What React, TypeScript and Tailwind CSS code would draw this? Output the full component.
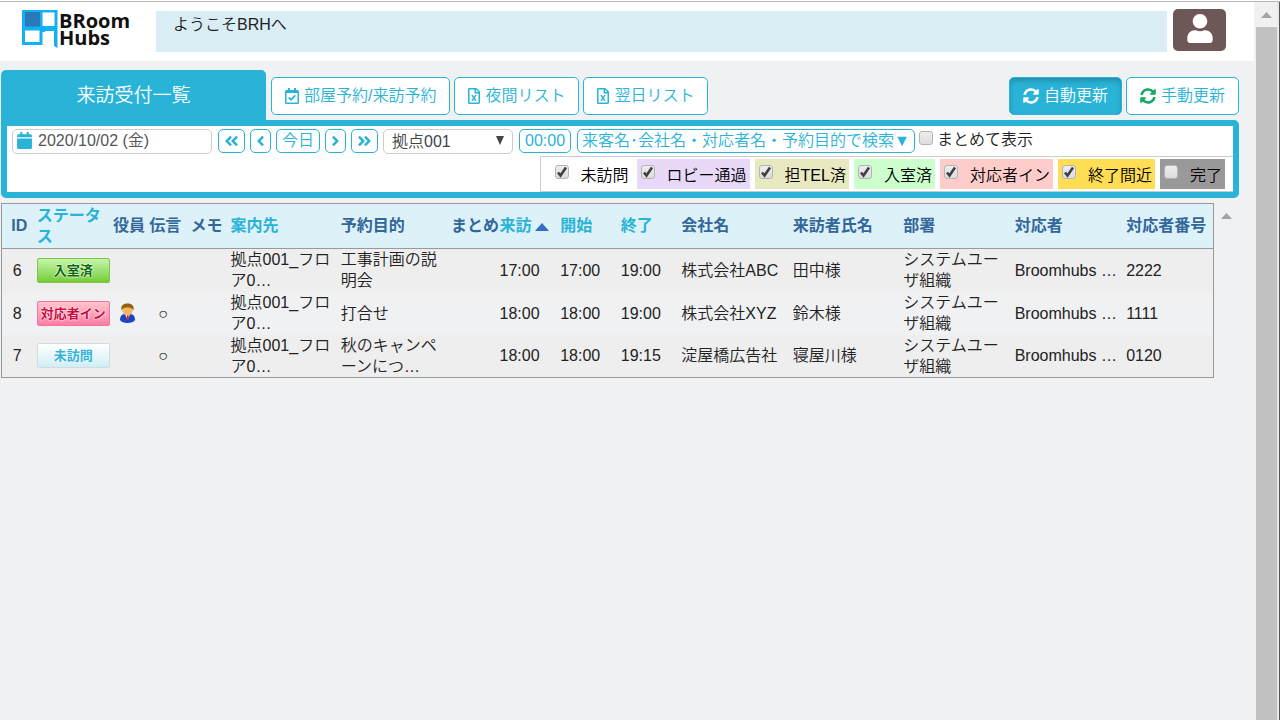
import type { ReactNode } from "react";
import {
  FaAngleDoubleLeft,
  FaAngleDoubleRight,
  FaAngleLeft,
  FaAngleRight,
  FaCalendar,
  FaRegCalendarCheck,
  FaRegFileExcel,
  FaSyncAlt,
  FaUser,
} from "react-icons/fa";

function Logo() {
  return (
    <a href="#" aria-label="BRoom Hubs" className="mt-2 ml-[22px] flex w-[134px] shrink-0">
      <svg width="37" height="39" viewBox="0 0 37 39" className="shrink-0">
        <path d="M0 0h35.500v38l-3.500-2V21h-9v14H0z" fill="#12b0f5" />
        <path d="M3 2h15v14.500H3z" fill="#2a78b8" />
        <path d="M20.500 2.500h12V16h-12zM3 20.500h14.500v11.500H3z" fill="#fff" />
        <path d="M20.500 22H23v14h-2.500z" fill="#fff" />
      </svg>
      <span className="flex flex-col font-['Open_Sans',sans-serif] text-[20px] leading-[17px] font-bold text-[#111]">
        <span className="pt-0.5">BRoom</span>
        <span>Hubs</span>
      </span>
    </a>
  );
}

function TabButton({ icon, children }: { icon: ReactNode; children: ReactNode }) {
  return (
    <button className="flex h-[38px] items-center gap-[5px] rounded-[5px] border border-[#29b3d7] bg-white px-[13px] pb-px text-[#29b3d7]">
      {icon}
      {children}
    </button>
  );
}

function SmallButton({ label, children }: { label?: string; children: ReactNode }) {
  return (
    <button
      aria-label={label}
      className="flex h-6 shrink-0 items-center rounded-[5px] border border-[#29b3d7] bg-white px-[5px] whitespace-nowrap text-[#29b3d7]"
    >
      {children}
    </button>
  );
}

function CheckBox({ id, checked }: { id: string; checked?: boolean }) {
  return (
    <span className="relative flex size-[14px] shrink-0">
      <input
        id={id}
        type="checkbox"
        defaultChecked={checked}
        className="peer size-[14px] appearance-none rounded-[3px] border border-[#b4b4b4] bg-linear-to-b from-[#eeeeee] to-[#dcdcdc]"
      />
      <svg
        viewBox="0 0 14 14"
        className="pointer-events-none absolute inset-0 hidden size-[14px] peer-checked:block"
      >
        <path d="M3 7.5 5.5 10.5 11 2.5" fill="none" stroke="#404040" strokeWidth="2.6" />
      </svg>
    </span>
  );
}

const filters = [
  { id: "f1", label: "未訪問", color: "bg-white", on: true },
  { id: "f2", label: "ロビー通過", color: "bg-[#e8d9f8]", on: true },
  { id: "f3", label: "担TEL済", color: "bg-[#e8e9c0]", on: true },
  { id: "f4", label: "入室済", color: "bg-[#ccffcc]", on: true },
  { id: "f5", label: "対応者イン", color: "bg-[#ffcccc]", on: true },
  { id: "f6", label: "終了間近", color: "bg-[#ffdd55]", on: true },
  { id: "f7", label: "完了", color: "bg-[#999999]", on: false },
];

const statusStyles = {
  in: {
    label: "入室済",
    box: "border-[#7cc648] bg-linear-to-b from-[#c5f5a8] to-[#76cc30]",
    text: "text-[#0a6a0a] [text-shadow:0_0_2px_#fff,0_0_2px_#fff]",
  },
  host: {
    label: "対応者イン",
    box: "border-[#f573a0] bg-linear-to-b from-[#ffc4cc] to-[#ff7ca4]",
    text: "text-[#cc0a3c] [text-shadow:0_0_2px_#fff,0_0_2px_#fff]",
  },
  none: {
    label: "未訪問",
    box: "border-[#d3dcdc] bg-linear-to-b from-white to-[#d0eef7]",
    text: "text-[#35b4da] [text-shadow:0_0_2px_#fff]",
  },
};

type Visit = {
  id: number;
  status: keyof typeof statusStyles;
  vip?: boolean;
  message?: boolean;
  place: string;
  purpose: string;
  arrive: string;
  start: string;
  end: string;
  company: string;
  visitor: string;
  host: string;
  phone: string;
};

const visits: Visit[] = [
  { id: 6, status: "in", place: "拠点001_フロア0…", purpose: "工事計画の説明会", arrive: "17:00", start: "17:00", end: "19:00", company: "株式会社ABC", visitor: "田中様", host: "Broomhubs …", phone: "2222" },
  { id: 8, status: "host", vip: true, message: true, place: "拠点001_フロア0…", purpose: "打合せ", arrive: "18:00", start: "18:00", end: "19:00", company: "株式会社XYZ", visitor: "鈴木様", host: "Broomhubs …", phone: "1111" },
  { id: 7, status: "none", message: true, place: "拠点001_フロア0…", purpose: "秋のキャンペーンにつ…", arrive: "18:00", start: "18:00", end: "19:15", company: "淀屋橋広告社", visitor: "寝屋川様", host: "Broomhubs …", phone: "0120" },
];

const columns = [
  { label: "ID", width: "w-[2.9%]", sortable: false },
  { label: "ステータス", width: "w-[6.3%]", sortable: true },
  { label: "役員", width: "w-[3%]", sortable: false },
  { label: "伝言", width: "w-[3.4%]", sortable: false },
  { label: "メモ", width: "w-[3.3%]", sortable: false },
  { label: "案内先", width: "w-[9.1%]", sortable: true },
  { label: "予約目的", width: "w-[9.1%]", sortable: false },
  { label: "まとめ", width: "w-[4%]", sortable: false },
  { label: "来訪", width: "w-[5%]", sortable: true },
  { label: "開始", width: "w-[5%]", sortable: true },
  { label: "終了", width: "w-[5%]", sortable: true },
  { label: "会社名", width: "w-[9.2%]", sortable: false },
  { label: "来訪者氏名", width: "w-[9.1%]", sortable: false },
  { label: "部署", width: "w-[9.2%]", sortable: false },
  { label: "対応者", width: "w-[9.2%]", sortable: false },
  { label: "対応者番号", width: "w-[7.2%]", sortable: false },
];

function Executive() {
  return (
    <svg width="17" height="21" viewBox="0 0 17 21" role="img" aria-label="役員">
      <path d="M1 17c0-4 2-6 5-6h5c3 0 5 2 5 6-2 4-13 4-15 0z" fill="#1546c8" />
      <path d="M6 11h5l-2.500 6z" fill="#fff" />
      <path d="M8 12h1.500l.5 4-1.200 2-1.300-2z" fill="#d22" />
      <ellipse cx="8.500" cy="7" rx="5.200" ry="5.500" fill="#f7b469" />
      <path d="M2.500 7.500C1.500 2 5 .5 8.500 .5s7 1.500 6 7C13.500 5 11 4.500 8.500 4.500S3.500 5 2.500 7.500z" fill="#94600f" />
    </svg>
  );
}

function VisitTable() {
  return (
    <table className="w-full table-fixed border-collapse border border-[#999] leading-[21px] text-[#222]">
      <thead>
        <tr className="h-[45px] border-b border-[#999] bg-[#dcf2f8]">
          {columns.map((c, i) => (
            <th
              key={c.label}
              className={`${c.width} p-0 pb-px font-bold ${i === 0 ? "text-center" : "text-left"} ${
                i === 1 ? "pr-2" : "whitespace-nowrap"
              } ${c.sortable ? "text-[#29b3d7]" : "text-[#336699]"}`}
            >
              {c.label === "来訪" ? (
                <span className="flex items-center gap-[3px]">
                  来訪
                  <svg width="14" height="8" viewBox="0 0 14 8" className="mt-0.5 shrink-0">
                    <path d="M7 0 14 8H0z" fill="#2f6fc4" />
                  </svg>
                </span>
              ) : (
                c.label
              )}
            </th>
          ))}
        </tr>
      </thead>
      <tbody>
        {visits.map((v) => {
          const s = statusStyles[v.status];
          return (
            <tr key={v.id} className="h-[43px] odd:bg-[#eee] even:bg-[#f0f1f3]">
              <td className="p-0 pr-1 text-center">{v.id}</td>
              <td className="p-0">
                <span
                  className={`flex h-[25px] w-[73px] items-center justify-center rounded-[2px] border text-[13px] leading-none font-bold ${s.box} ${s.text}`}
                >
                  {s.label}
                </span>
              </td>
              <td className="p-0 pl-1.5">{v.vip && <Executive />}</td>
              <td className="p-0 pl-[9px]">{v.message && "○"}</td>
              <td className="p-0" />
              <td className="p-0 pr-2.5 break-all">{v.place}</td>
              <td className="p-0 pr-2.5 break-all">{v.purpose}</td>
              <td className="p-0" />
              <td className="p-0">{v.arrive}</td>
              <td className="p-0">{v.start}</td>
              <td className="p-0">{v.end}</td>
              <td className="p-0 whitespace-nowrap">{v.company}</td>
              <td className="p-0">{v.visitor}</td>
              <td className="p-0 pr-2.5 break-all">システムユーザ組織</td>
              <td className="p-0 whitespace-nowrap">{v.host}</td>
              <td className="p-0">{v.phone}</td>
            </tr>
          );
        })}
      </tbody>
    </table>
  );
}

export default function App() {
  return (
    <div className="flex min-h-screen border-t border-white bg-[#eff1f3] font-['Liberation_Sans','Noto_Sans_CJK_JP',sans-serif] text-[16px] leading-[22px] font-[350] text-[#222]">
      <main className="min-w-0 flex-1 border-t border-[#b5b5b5]">
        <header className="flex h-[59px] bg-white">
          <Logo />
          <div className="mt-[9px] h-[41px] flex-1 bg-[#d9edf5] px-[17px] pt-[3px]">ようこそBRHへ</div>
          <button
            aria-label="ユーザー"
            className="mt-[7px] mr-7 ml-1.5 flex h-[42px] w-[53px] items-center justify-center rounded-[5px] bg-[#6e5857] pb-1 text-white"
          >
            <FaUser className="h-[29px] w-[26px]" />
          </button>
        </header>

        <div className="mt-[9px] mr-[15px] ml-px">
          <nav className="flex h-[50px] items-start">
            <button className="h-[50px] w-[265px] rounded-t-[5px] bg-[#29b3d7] pt-0.5 text-[19px] text-white">
              来訪受付一覧
            </button>
            <div className="mt-[7px] ml-[5px] flex flex-1 gap-1">
              <TabButton icon={<FaRegCalendarCheck className="w-[14px]" />}>部屋予約/来訪予約</TabButton>
              <TabButton icon={<FaRegFileExcel className="w-3" />}>夜間リスト</TabButton>
              <TabButton icon={<FaRegFileExcel className="w-3" />}>翌日リスト</TabButton>
            </div>
            <div className="mt-[7px] flex gap-1">
              <button className="flex h-[38px] items-center gap-[5px] rounded-[5px] border border-[#29b3d7] bg-[#29b3d7] px-[13px] pb-px text-white shadow-[inset_0_3px_5px_rgba(0,0,0,0.2)]">
                <FaSyncAlt />
                自動更新
              </button>
              <TabButton icon={<FaSyncAlt className="text-[#12a866]" />}>手動更新</TabButton>
            </div>
          </nav>

          <section className="rounded-tr-[5px] rounded-b-[5px] border-6 border-[#29b3d7] bg-white">
            <div className="flex h-[30px] items-start pt-[3px] pl-[5px]">
              <div className="flex h-[25px] w-[200px] shrink-0 items-start gap-1.5 rounded-[5px] border border-[#ccc] px-1 text-[#555]">
                <FaCalendar className="mt-[2px] h-[17px] w-[15px] shrink-0 text-[#29b3d7]" />
                <input
                  aria-label="日付"
                  defaultValue="2020/10/02 (金)"
                  className="h-[22px] w-full min-w-0 bg-transparent outline-none"
                />
              </div>
              <div className="ml-1.5 flex gap-[5px]">
                <SmallButton label="前週"><FaAngleDoubleLeft className="w-[15px]" /></SmallButton>
                <SmallButton label="前日"><FaAngleLeft className="w-[9px]" /></SmallButton>
                <SmallButton>今日</SmallButton>
                <SmallButton label="翌日"><FaAngleRight className="w-[9px]" /></SmallButton>
                <SmallButton label="翌週"><FaAngleDoubleRight className="w-[15px]" /></SmallButton>
              </div>
              <div className="relative mr-1.5 ml-[5px] w-[130px] shrink-0">
                <select
                  aria-label="拠点"
                  className="h-[25px] w-full appearance-none rounded-[5px] border border-[#ccc] bg-white pl-2 text-[#444]"
                >
                  <option>拠点001</option>
                </select>
                <svg
                  width="8"
                  height="9"
                  viewBox="0 0 8 9"
                  className="pointer-events-none absolute top-[7px] right-[9px]"
                >
                  <path d="M0 0h8L4 9z" fill="#444" />
                </svg>
              </div>
              <div className="flex gap-1.5">
                <SmallButton>00:00</SmallButton>
                <button className="flex h-6 shrink-0 items-center rounded-[5px] border border-[#29b3d7] bg-white px-1 whitespace-nowrap text-[#29b3d7]">
                  来客名･会社名・対応者名・予約目的で検索▼
                </button>
              </div>
              <label htmlFor="group" className="ml-1 flex gap-1 whitespace-nowrap">
                <span className="pt-0.5"><CheckBox id="group" /></span>
                まとめて表示
              </label>
            </div>
            <div className="flex justify-end">
              <div className="flex gap-[5px] border-t border-b border-l border-[#ccc] py-0.5 pr-2 pl-2.5">
                {filters.map((f) => (
                  <label
                    key={f.id}
                    htmlFor={f.id}
                    className={`flex h-[30px] gap-[12px] pt-1.5 pr-[3px] pl-1 whitespace-nowrap text-black ${f.color}`}
                  >
                    <CheckBox id={f.id} checked={f.on} />
                    {f.label}
                  </label>
                ))}
              </div>
            </div>
          </section>

          <div className="mt-[5px] flex">
            <div className="min-w-0 flex-1"><VisitTable /></div>
            <svg width="11" height="6" viewBox="0 0 11 6" className="mt-[10px] mr-[7px] ml-[7px] shrink-0">
              <path d="M5.500 0 11 6H0z" fill="#a3a3a3" />
            </svg>
          </div>
        </div>
      </main>

      <aside className="flex w-[26px] shrink-0 border-t border-[#b5b5b5]">
        <div className="flex flex-1 flex-col items-center bg-[#f1f1f1]">
          <svg width="11" height="6" viewBox="0 0 11 6" className="mt-[10px] mb-[9px] ml-0.5">
            <path d="M5.500 0 11 6H0z" fill="#a3a3a3" />
          </svg>
          <div className="ml-0.5 w-[21px] flex-1 bg-[#c1c1c1]" />
        </div>
        <div className="w-0.5 bg-[#e8e8e8]" />
        <div className="w-px bg-[#555]" />
      </aside>
    </div>
  );
}
